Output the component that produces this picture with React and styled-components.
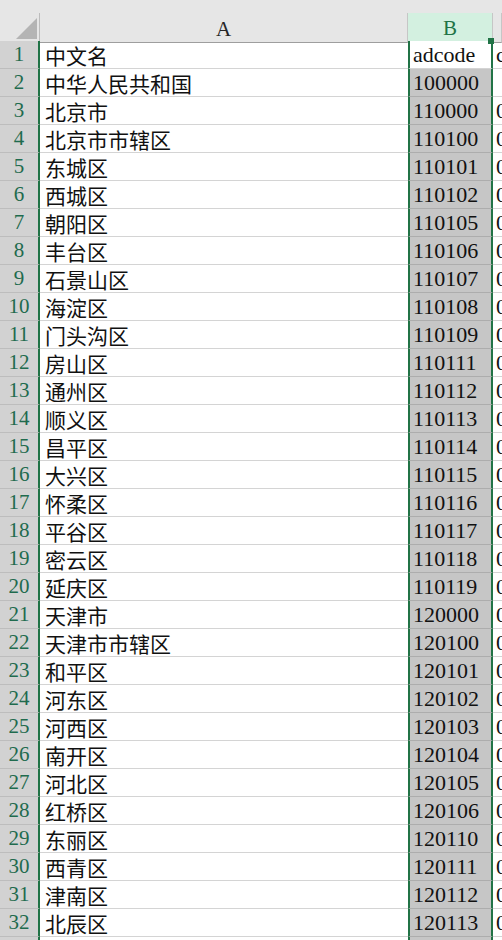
import React from "react";
import styled, { createGlobalStyle } from "styled-components";

const GlobalStyle = createGlobalStyle`
  html, body { margin: 0; padding: 0; background: #ffffff; overflow: hidden; }
  #root { width: 502px; height: 940px; overflow: hidden; }
`;

const GREEN = "#217346";
const COLS = "40px 368px 85px 1fr";

const Sheet = styled.div`
  position: relative;
  width: 502px;
  height: 940px;
  overflow: hidden;
  background: #ffffff;
  font-family: "Liberation Serif", "Noto Sans CJK SC", serif;
`;

const TopStrip = styled.div`
  height: 13px;
  background: #e6e6e6;
`;

const HeaderRow = styled.div`
  display: grid;
  grid-template-columns: ${COLS};
  height: 28px;
  background: #e6e6e6;
`;

const Corner = styled.div`
  box-sizing: border-box;
  border-right: 1px solid #bcbcbc;
  border-bottom: 1px solid #ababab;
  display: flex;
  align-items: flex-end;
  justify-content: flex-end;
  padding: 0 2px 3px 0;
`;

const ColHead = styled.div`
  box-sizing: border-box;
  display: flex;
  align-items: center;
  justify-content: center;
  padding-top: 3px;
  font-size: 21px;
  background: ${(p) => (p.$active ? "#d3f0e0" : "#e6e6e6")};
  color: ${(p) => (p.$active ? GREEN : "#262626")};
  border-right: 1px solid #c6c6c6;
  border-bottom: ${(p) => (p.$active ? `2px solid ${GREEN}` : "1px solid #9e9e9e")};
`;

const Row = styled.div`
  display: grid;
  grid-template-columns: ${COLS};
  height: 28px;
`;

const RowHead = styled.div`
  box-sizing: border-box;
  background: #d2d2d2;
  color: #1f6b4e;
  border-right: 2px solid ${GREEN};
  border-bottom: 1px solid #bdbdbd;
  display: flex;
  align-items: center;
  justify-content: center;
  font-size: 21px;
`;

const Cell = styled.div`
  box-sizing: border-box;
  display: flex;
  align-items: center;
  white-space: nowrap;
  overflow: hidden;
  font-family: "Liberation Serif", "Noto Sans CJK SC", serif;
  font-size: ${(p) => p.$size || 21}px;
  color: #111;
  border-bottom: 1px solid #d4d4d4;
  padding-left: ${(p) => p.$pad || 5}px;
`;

const SelCell = styled(Cell)`
  background: ${(p) => (p.$active ? "#ffffff" : "#c6c6c6")};
  border-left: 2px solid ${GREEN};
  border-right: 2px solid ${GREEN};
  border-bottom-color: ${(p) => (p.$active ? "#d4d4d4" : "#adadad")};
  padding-left: 3px;
  font-size: 22px;
`;

const Handle = styled.div`
  position: absolute;
  left: 488px;
  top: 38px;
  width: 6px;
  height: 6px;
  background: ${GREEN};
`;

const rows = [
  ["中文名", "adcode", "citycode"],
  ["中华人民共和国", "100000", ""],
  ["北京市", "110000", "010"],
  ["北京市市辖区", "110100", "010"],
  ["东城区", "110101", "010"],
  ["西城区", "110102", "010"],
  ["朝阳区", "110105", "010"],
  ["丰台区", "110106", "010"],
  ["石景山区", "110107", "010"],
  ["海淀区", "110108", "010"],
  ["门头沟区", "110109", "010"],
  ["房山区", "110111", "010"],
  ["通州区", "110112", "010"],
  ["顺义区", "110113", "010"],
  ["昌平区", "110114", "010"],
  ["大兴区", "110115", "010"],
  ["怀柔区", "110116", "010"],
  ["平谷区", "110117", "010"],
  ["密云区", "110118", "010"],
  ["延庆区", "110119", "010"],
  ["天津市", "120000", "022"],
  ["天津市市辖区", "120100", "022"],
  ["和平区", "120101", "022"],
  ["河东区", "120102", "022"],
  ["河西区", "120103", "022"],
  ["南开区", "120104", "022"],
  ["河北区", "120105", "022"],
  ["红桥区", "120106", "022"],
  ["东丽区", "120110", "022"],
  ["西青区", "120111", "022"],
  ["津南区", "120112", "022"],
  ["北辰区", "120113", "022"],
  ["武清区", "120114", "022"],
];

export default function App() {
  return (
    <>
      <GlobalStyle />
      <Sheet>
        <TopStrip />
        <HeaderRow>
          <Corner>
            <svg width="21" height="21" viewBox="0 0 21 21">
              <polygon points="21,0 21,21 0,21" fill="#b4b4b4" />
            </svg>
          </Corner>
          <ColHead>A</ColHead>
          <ColHead $active>B</ColHead>
          <ColHead />
        </HeaderRow>
        {rows.map((r, i) => (
          <Row key={i}>
            <RowHead>{i + 1}</RowHead>
            <Cell>{r[0]}</Cell>
            <SelCell $active={i === 0}>{r[1]}</SelCell>
            <Cell $pad={3} $size={22}>{r[2]}</Cell>
          </Row>
        ))}
        <Handle />
      </Sheet>
    </>
  );
}
